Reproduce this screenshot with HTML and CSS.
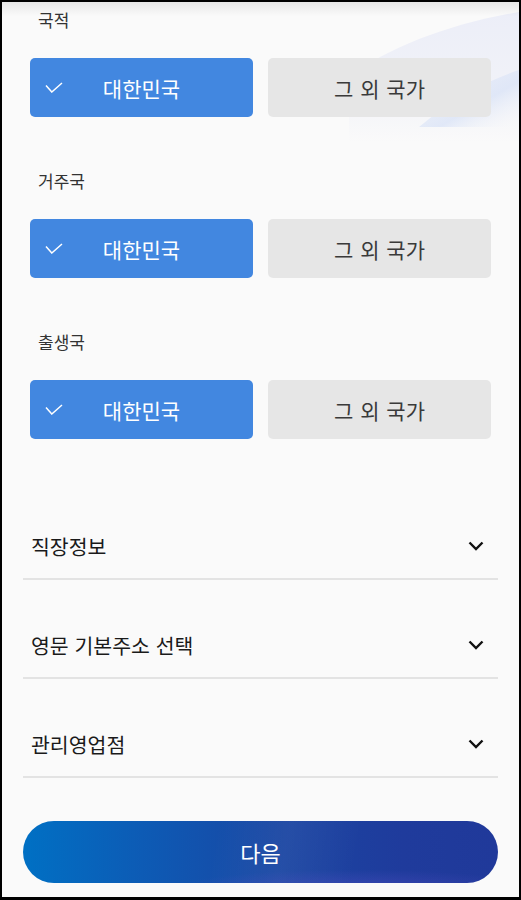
FILE: index.html
```html
<!DOCTYPE html>
<html lang="ko">
<head>
    <meta charset="UTF-8">
    <meta name="viewport" content="width=device-width, initial-scale=1.0">
    <title>고객정보 입력</title>
    <link rel="stylesheet" href="styles.css">
</head>
<body>

    <div class="screen">
        <svg class="bg-wave" width="170" height="140" viewBox="0 0 170 140">
            <defs>
                <linearGradient id="fade" x1="0" y1="0" x2="0" y2="1">
                    <stop offset="0" stop-color="#eceef8"/>
                    <stop offset="0.6" stop-color="#f1f2f8"/>
                    <stop offset="1" stop-color="#fafafa"/>
                </linearGradient>
                <linearGradient id="band" x1="0" y1="0" x2="1" y2="1">
                    <stop offset="0" stop-color="#dbe4f7" stop-opacity="0"/>
                    <stop offset="0.6" stop-color="#dbe4f7" stop-opacity="0.8"/>
                    <stop offset="1" stop-color="#fafafa" stop-opacity="0"/>
                </linearGradient>
            </defs>
            <path d="M0 75 C40 45 100 22 170 10 L170 140 L0 140 Z" fill="url(#fade)"/>
            <path d="M70 125 C105 95 140 78 170 68 L170 125 Z" fill="url(#band)"/>
        </svg>

        <div class="country-list">
            <div class="country-group">
                <div class="group-label">국적</div>
                <div class="choice-row">
                    <div class="choice choice-active">
                        <svg class="check" width="18" height="11" viewBox="0 0 18 11"><path d="M1 3.5 L6.8 10 L17 1" fill="none" stroke="#fff" stroke-width="1.5"/></svg>
                        대한민국
                    </div>
                    <div class="choice">그 외 국가</div>
                </div>
            </div>

            <div class="country-group">
                <div class="group-label">거주국</div>
                <div class="choice-row">
                    <div class="choice choice-active">
                        <svg class="check" width="18" height="11" viewBox="0 0 18 11"><path d="M1 3.5 L6.8 10 L17 1" fill="none" stroke="#fff" stroke-width="1.5"/></svg>
                        대한민국
                    </div>
                    <div class="choice">그 외 국가</div>
                </div>
            </div>

            <div class="country-group">
                <div class="group-label">출생국</div>
                <div class="choice-row">
                    <div class="choice choice-active">
                        <svg class="check" width="18" height="11" viewBox="0 0 18 11"><path d="M1 3.5 L6.8 10 L17 1" fill="none" stroke="#fff" stroke-width="1.5"/></svg>
                        대한민국
                    </div>
                    <div class="choice">그 외 국가</div>
                </div>
            </div>
        </div>

        <div class="accordion">
            <div class="acc-row">
                <span>직장정보</span>
                <svg width="16" height="10" viewBox="0 0 16 10"><path d="M1.5 1.5 L8 8 L14.5 1.5" fill="none" stroke="#111" stroke-width="2.4"/></svg>
            </div>
            <div class="acc-row">
                <span>영문 기본주소 선택</span>
                <svg width="16" height="10" viewBox="0 0 16 10"><path d="M1.5 1.5 L8 8 L14.5 1.5" fill="none" stroke="#111" stroke-width="2.4"/></svg>
            </div>
            <div class="acc-row">
                <span>관리영업점</span>
                <svg width="16" height="10" viewBox="0 0 16 10"><path d="M1.5 1.5 L8 8 L14.5 1.5" fill="none" stroke="#111" stroke-width="2.4"/></svg>
            </div>
        </div>

        <div class="next-btn">다음</div>
    </div>

</body>
</html>
```

FILE: styles.css
```css
* {
    margin: 0;
    padding: 0;
    box-sizing: border-box;
}

body {
    width: 521px;
    height: 900px;
    overflow: hidden;
    background: #fafafa;
    font-family: "Noto Sans CJK KR", "Noto Sans", sans-serif;
    color: #222;
}

.screen {
    position: relative;
    width: 100%;
    height: 100%;
    border: 2px solid #000;
    border-bottom-width: 3px;
    background: #fafafa;
    overflow: hidden;
}

/* 상단 헤더 그림자 */
.screen::before {
    content: "";
    position: absolute;
    top: 0;
    left: 0;
    right: 0;
    height: 14px;
    background: linear-gradient(to bottom, rgba(0,0,0,0.08), rgba(0,0,0,0));
    z-index: 2;
}

.bg-wave {
    position: absolute;
    top: 0;
    right: 0;
    z-index: 0;
}

.country-list {
    position: relative;
    z-index: 1;
    padding: 6px 28px 0;
}

.country-group + .country-group {
    margin-top: 52px;
}

.group-label {
    font-size: 17px;
    line-height: 24px;
    color: #333;
    padding-left: 8px;
    margin-bottom: 26px;
}

.choice-row {
    display: grid;
    grid-template-columns: 1fr 1fr;
    gap: 15px;
}

.choice {
    position: relative;
    height: 59px;
    border-radius: 5px;
    background: #e6e6e6;
    color: #3a3a3a;
    font-size: 21px;
    font-weight: 400;
    display: flex;
    align-items: center;
    justify-content: center;
    word-spacing: 1px;
}

.choice-active {
    background: #4287e0;
    color: #fff;
}

.check {
    position: absolute;
    left: 15px;
    top: 24px;
}

.accordion {
    margin: 42px 21px 0;
}

.acc-row {
    display: flex;
    justify-content: space-between;
    align-items: center;
    padding: 53px 14px 20px 8px;
    border-bottom: 2px solid #e3e3e3;
    font-size: 20.5px;
    line-height: 24px;
    font-weight: 400;
    color: #1a1a1a;
}

.next-btn {
    margin: 43px 21px 0;
    height: 62px;
    border-radius: 31px;
    display: flex;
    align-items: center;
    justify-content: center;
    color: #fff;
    font-size: 22px;
    font-weight: 400;
    background:
        radial-gradient(ellipse 55% 45% at 70% 110%, rgba(90, 80, 200, 0.45), rgba(90, 80, 200, 0) 70%),
        linear-gradient(100deg, rgba(255,255,255,0) 40%, rgba(255,255,255,0.05) 55%, rgba(255,255,255,0) 70%),
        linear-gradient(to right, #0070c4 0%, #0d5bb5 25%, #1a45a2 55%, #1f3b9c 80%, #20399a 100%);
}
```
